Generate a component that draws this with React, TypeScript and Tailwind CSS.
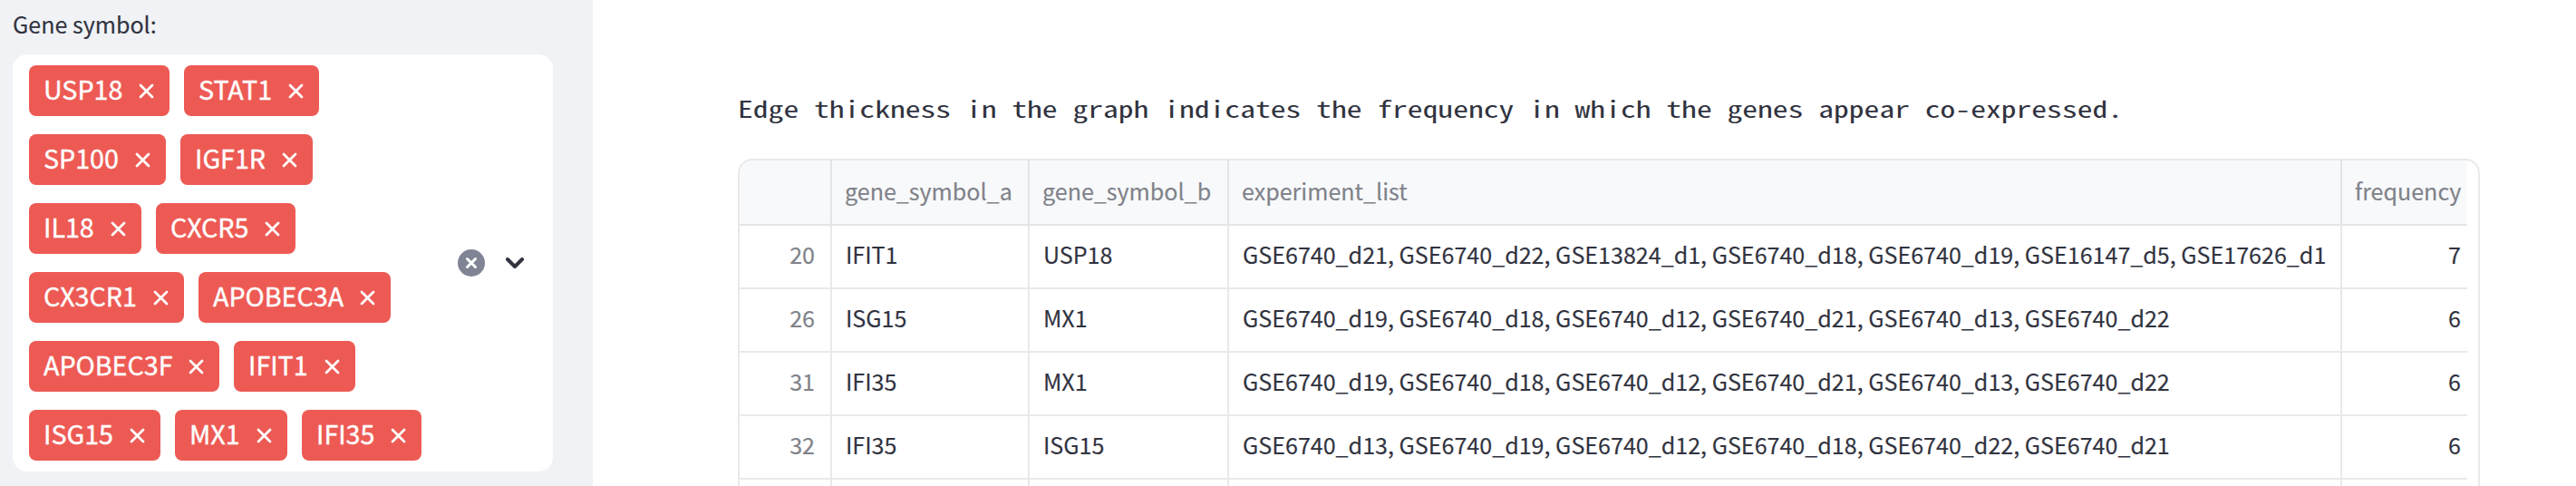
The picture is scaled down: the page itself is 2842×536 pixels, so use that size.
const chipRows = [
  [
    { name: "USP18", width: "w-[155px]" },
    { name: "STAT1", width: "w-[149px]" },
  ],
  [
    { name: "SP100", width: "w-[151px]" },
    { name: "IGF1R", width: "w-[146px]" },
  ],
  [
    { name: "IL18", width: "w-[124px]" },
    { name: "CXCR5", width: "w-[154px]" },
  ],
  [
    { name: "CX3CR1", width: "w-[171px]" },
    { name: "APOBEC3A", width: "w-[212px]" },
  ],
  [
    { name: "APOBEC3F", width: "w-[210px]" },
    { name: "IFIT1", width: "w-[134px]" },
  ],
  [
    { name: "ISG15", width: "w-[145px]" },
    { name: "MX1", width: "w-[124px]" },
    { name: "IFI35", width: "w-[132px]" },
  ],
];

const rows = [
  { id: 20, a: "IFIT1", b: "USP18", list: "GSE6740_d21, GSE6740_d22, GSE13824_d1, GSE6740_d18, GSE6740_d19, GSE16147_d5, GSE17626_d1", freq: 7 },
  { id: 26, a: "ISG15", b: "MX1", list: "GSE6740_d19, GSE6740_d18, GSE6740_d12, GSE6740_d21, GSE6740_d13, GSE6740_d22", freq: 6 },
  { id: 31, a: "IFI35", b: "MX1", list: "GSE6740_d19, GSE6740_d18, GSE6740_d12, GSE6740_d21, GSE6740_d13, GSE6740_d22", freq: 6 },
  { id: 32, a: "IFI35", b: "ISG15", list: "GSE6740_d13, GSE6740_d19, GSE6740_d12, GSE6740_d18, GSE6740_d22, GSE6740_d21", freq: 6 },
];

const grid = "grid grid-cols-[102px_218px_220px_1228px_138px] w-[1906px] whitespace-nowrap";
const headBase = "flex items-center border-b-2 border-[#e3e4e8] bg-[#f8f9fb] pb-[2px] pl-[14px] text-[#808289]";
const headCell = `${headBase} border-r-2`;
const cellBase = "flex items-center border-b-2 border-[#e9e9ea] pb-1";
const cell = `${cellBase} border-r-2 pl-[15px]`;

function Chip({ name, width }: { name: string; width: string }) {
  return (
    <div className={`flex h-14 items-center justify-between rounded-lg bg-[#ed5a54] pr-[17px] pl-4 text-white [-webkit-text-stroke:0.4px] ${width}`}>
      <span className="-mt-[3px] text-[28.65px] leading-none">{name}</span>
      <svg width="17" height="17" viewBox="0 0 17 17" className="mt-px shrink-0" fill="none" stroke="currentColor" strokeWidth="2.8" strokeLinecap="round">
        <path d="M2 2 15 15M15 2 2 15" />
      </svg>
    </div>
  );
}

function Sidebar() {
  return (
    <aside className="w-[654px] shrink-0 bg-[#f0f2f6] pl-[14px]">
      <div className="flex h-[60px] items-center text-[25.07px] leading-none">
        <span className="-mt-[6px]">Gene symbol:</span>
      </div>
      <div className="flex h-[460px] w-[596px] items-center rounded-2xl bg-white pl-[18px]">
        <div className="flex w-[473px] shrink-0 flex-col gap-5">
          {chipRows.map((row, i) => (
            <div key={i} className="flex gap-4">
              {row.map((chip) => (
                <Chip key={chip.name} {...chip} />
              ))}
            </div>
          ))}
        </div>
        <svg width="30" height="30" viewBox="0 0 30 30" className="shrink-0" fill="none">
          <circle cx="15" cy="15" r="15" fill="#808495" />
          <path d="M10.5 10.5l9 9M19.5 10.5l-9 9" stroke="#fff" strokeWidth="3" strokeLinecap="round" />
        </svg>
        <svg width="20" height="12" viewBox="0 0 20 12" className="ml-[23px] shrink-0" fill="none" stroke="#31333f" strokeWidth="4" strokeLinecap="round" strokeLinejoin="round">
          <path d="M2 2l8 8 8-8" />
        </svg>
      </div>
    </aside>
  );
}

export default function App() {
  return (
    <div className="flex h-[536px] w-[2842px] overflow-hidden bg-white font-['Noto_Sans_CJK_SC',sans-serif] text-[#31333f] [-webkit-text-stroke:0.15px]">
      <Sidebar />
      <main className="pl-40">
        <p className="flex h-[175px] w-[1141px] origin-left scale-x-[1.34] items-center pt-[64px] font-['Noto_Sans_Mono_CJK_SC','Liberation_Mono',monospace] text-[25.07px] leading-none whitespace-pre [-webkit-text-stroke:0px]">
          Edge thickness in the graph indicates the frequency in which the genes appear co-expressed.
        </p>
        <div className="h-[400px] w-[1922px] overflow-hidden rounded-t-2xl border-2 border-[#e9e9ea] text-[25.07px] leading-none">
          <div className={`${grid} h-[72px]`}>
            <div className={headCell} />
            <div className={headCell}>gene_symbol_a</div>
            <div className={headCell}>gene_symbol_b</div>
            <div className={headCell}>experiment_list</div>
            <div className={headBase}>frequency</div>
          </div>
          {rows.map((row) => (
            <div key={row.id} className={`${grid} h-[70px]`}>
              <div className={`${cell} justify-end pr-[17px] text-[#808289]`}>{row.id}</div>
              <div className={cell}>{row.a}</div>
              <div className={cell}>{row.b}</div>
              <div className={cell}>{row.list}</div>
              <div className={`${cellBase} justify-end pr-[7px]`}>{row.freq}</div>
            </div>
          ))}
          <div className={`${grid} h-[70px]`}>
            <div className={cell} />
            <div className={cell} />
            <div className={cell} />
            <div className={cell} />
            <div className={cellBase} />
          </div>
        </div>
      </main>
    </div>
  );
}
